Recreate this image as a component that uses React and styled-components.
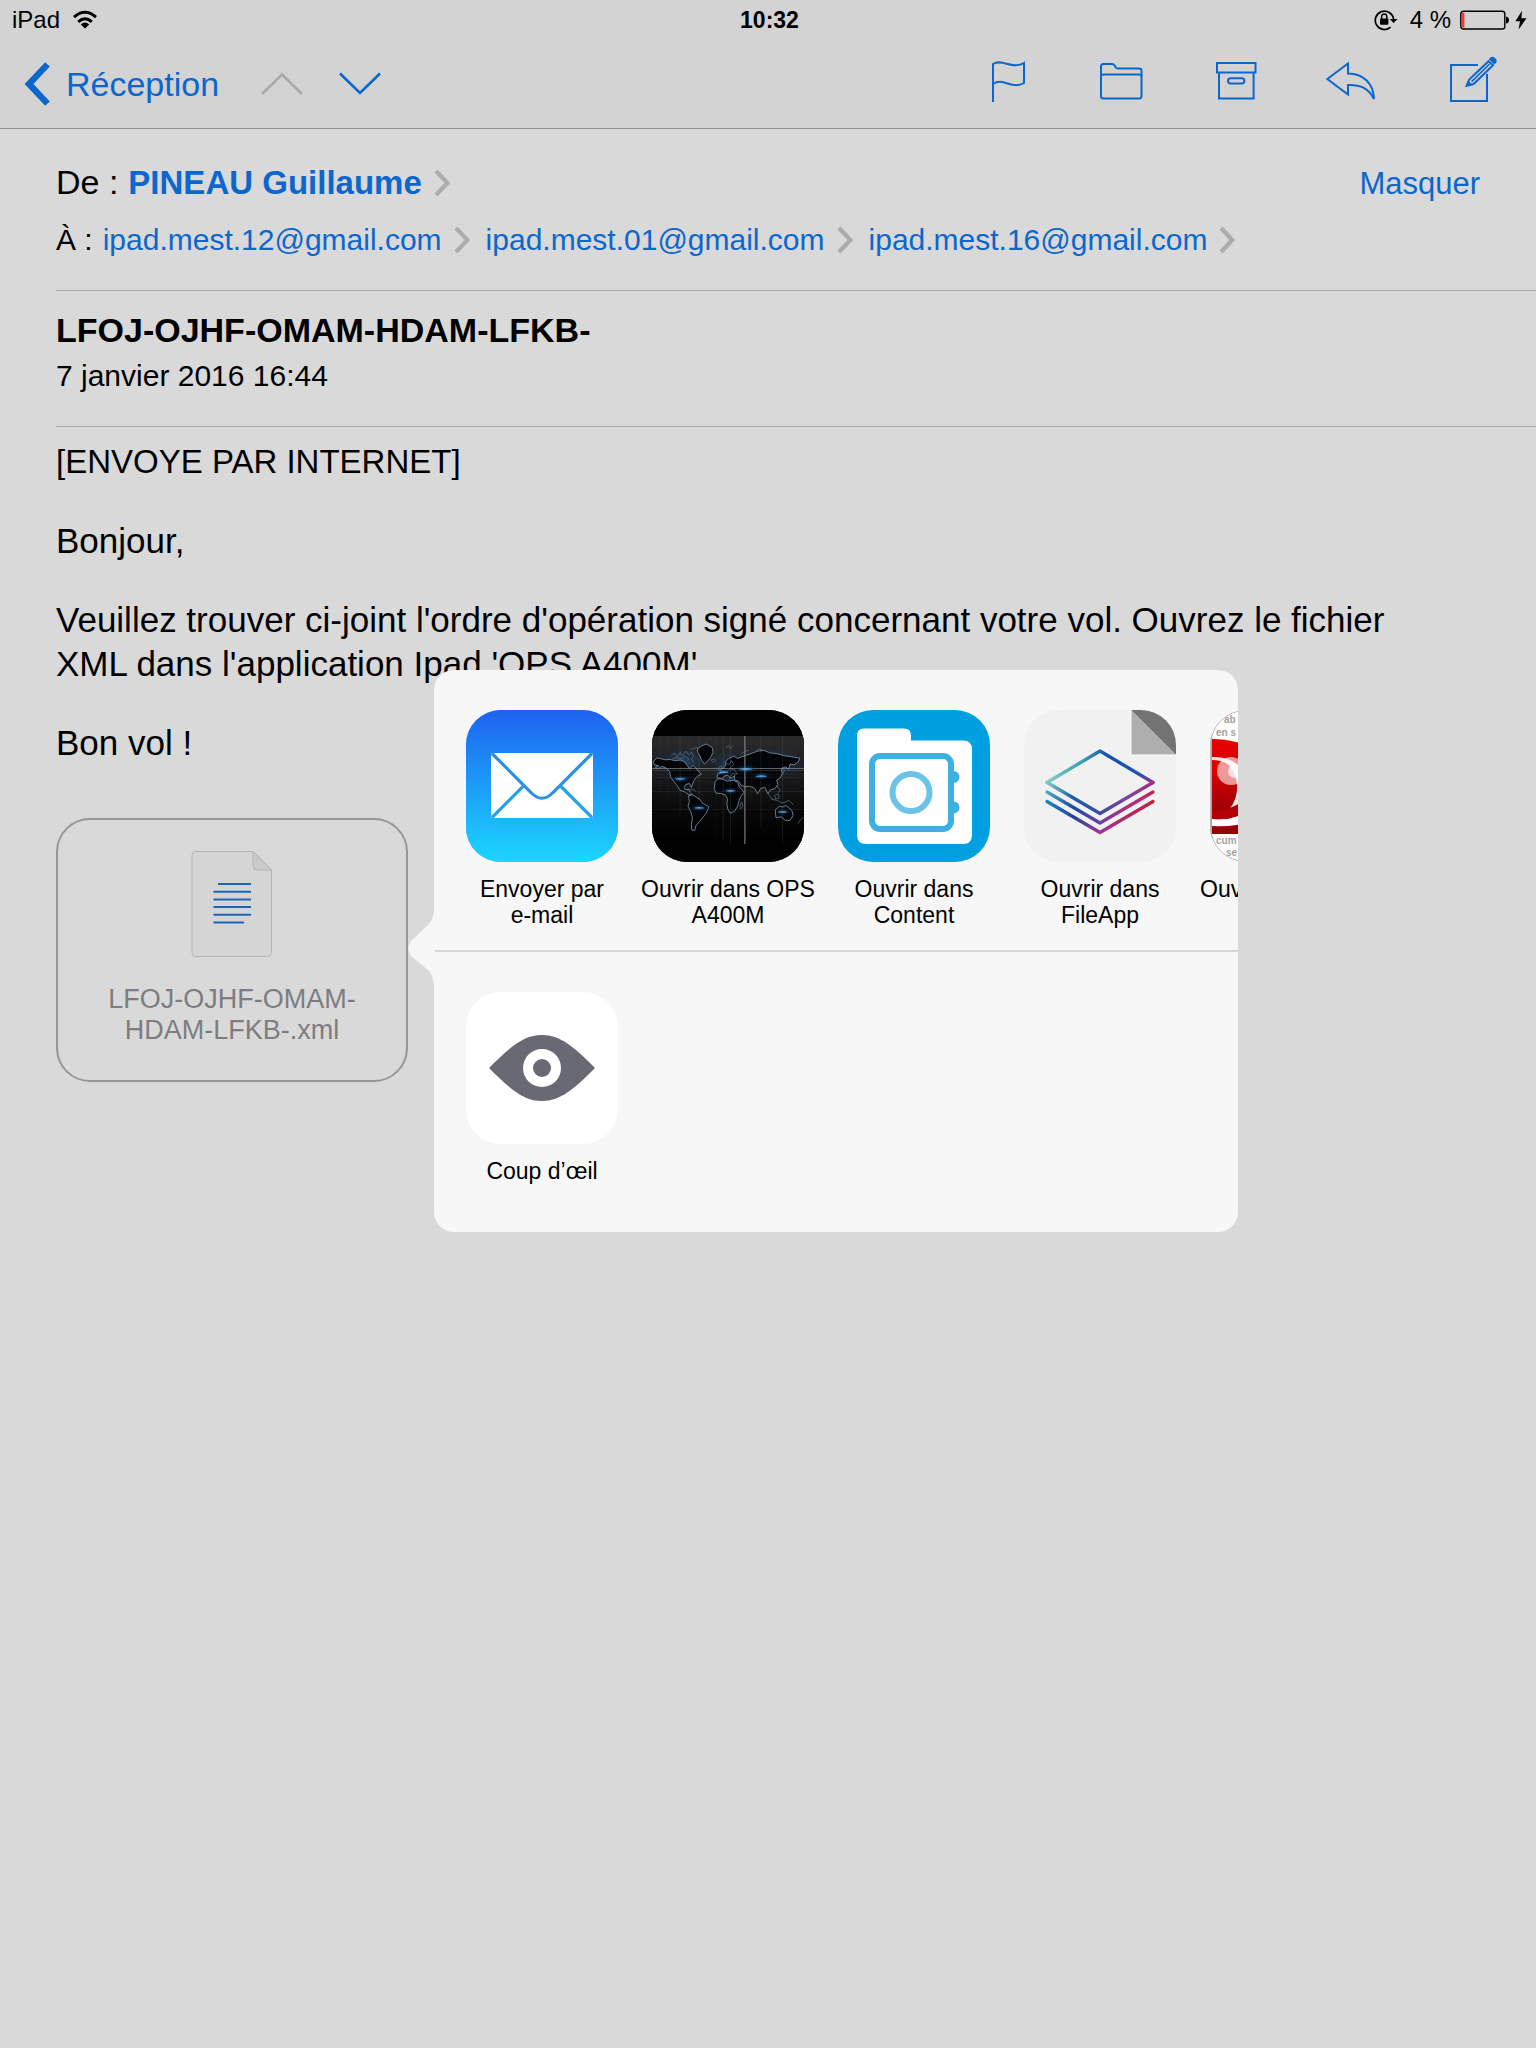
import React from "react";
import styled, { createGlobalStyle } from "styled-components";

const BLUE = "#0b67cd";
const FONT = '"Liberation Sans", Arial, Helvetica, sans-serif';

const GlobalStyle = createGlobalStyle`
  *, *::before, *::after { box-sizing: border-box; }
  body {
    margin: 0;
    background: #d9d9d9;
    color: #000;
    font-family: ${FONT};
  }
  h1, p { margin: 0; }
  svg { display: block; flex: none; }
`;

const Screen = styled.div`
  min-height: 100vh;
  overflow: hidden;
`;

const TopBar = styled.header`
  background: #d3d3d4;
  border-bottom: 1px solid #929294;
`;

const StatusBar = styled.div`
  display: grid;
  grid-template-columns: 1fr auto 1fr;
  align-items: center;
  height: 40px;
  padding: 0 9px 0 12px;
  font-size: 24px;
  line-height: 28px;
`;

const StatusGroup = styled.div`
  display: flex;
  align-items: center;
  gap: ${(p) => p.$gap}px;
  justify-content: ${(p) => (p.$end ? "flex-end" : "flex-start")};
`;

const Clock = styled.time`
  font-size: 23px;
  font-weight: 700;
`;

const NavBar = styled.nav`
  display: flex;
  align-items: center;
  justify-content: space-between;
  height: 88px;
  padding: 0 38px 0 24px;
`;

const NavGroup = styled.div`
  display: flex;
  align-items: center;
  gap: ${(p) => p.$gap}px;
`;

const PlainButton = styled.button`
  display: flex;
  align-items: center;
  padding: 0;
  border: 0;
  background: none;
  color: ${BLUE};
  font: inherit;
  cursor: pointer;

  &:disabled {
    color: #a9a9aa;
    cursor: default;
  }
`;

const BackButton = styled(PlainButton)`
  gap: 14px;
  padding-right: 6px;
  font-size: 34px;
  line-height: 44px;
`;

const TextButton = styled(PlainButton)`
  font-size: 31px;
  line-height: 36px;
`;

const Message = styled.main`
  padding-left: 56px;
`;

const Addresses = styled.section`
  display: flex;
  flex-direction: column;
  gap: 17px;
  padding: 31px 56px 32px 0;
  border-bottom: 1px solid #a9a9aa;
`;

const AddressRow = styled.div`
  display: flex;
  align-items: baseline;
  gap: ${(p) => p.$gap}px;
  font-size: ${(p) => p.$size}px;
  line-height: ${(p) => p.$line}px;
`;

const Contact = styled.a`
  display: flex;
  align-items: center;
  gap: 12px;
  color: ${BLUE};
  font-size: ${(p) => (p.$strong ? 33 : 30)}px;
  font-weight: ${(p) => (p.$strong ? 700 : 400)};
  text-decoration: none;
`;

const Recipients = styled.div`
  display: flex;
  flex-wrap: wrap;
  gap: 14px;
`;

const Spacer = styled.span`
  flex: 1;
`;

const SubjectBlock = styled.section`
  display: flex;
  flex-direction: column;
  gap: 8px;
  padding: 19px 0 32px;
  border-bottom: 1px solid #a9a9aa;
`;

const Subject = styled.h1`
  font-size: 34px;
  line-height: 40px;
`;

const SentDate = styled.time`
  font-size: 30px;
  line-height: 36px;
`;

const Body = styled.div`
  display: flex;
  flex-direction: column;
  gap: 35px;
  padding: 13px 84px 0 0;
  font-size: 35px;
  line-height: 44px;
`;

const Notice = styled.p`
  font-size: 33px;
`;

const AttachmentArea = styled.div`
  position: relative;
  width: 352px;
  margin-top: 53px;
`;

const Attachment = styled.button`
  display: flex;
  flex-direction: column;
  align-items: center;
  gap: 26px;
  width: 100%;
  height: 264px;
  padding: 30px 40px 0;
  border: 2px solid #979797;
  border-radius: 34px;
  background: none;
  color: #7d7d80;
  font-family: inherit;
  font-size: 27px;
  line-height: 31px;
`;

const Popover = styled.aside`
  position: absolute;
  top: -148px;
  left: 378px;
  width: 804px;
`;

const PopoverArrow = styled.svg`
  position: absolute;
  top: 240px;
  left: -26px;
`;

const Sheet = styled.div`
  overflow: hidden;
  border-radius: 20px;
  background: #f7f7f7;
`;

const ShareRow = styled.div`
  display: flex;
  gap: 14px;
  height: ${(p) => (p.$divided ? 282 : 280)}px;
  padding: 40px 0 0 22px;
  border-bottom: ${(p) => (p.$divided ? "2px solid #d5d6d8" : "0")};
  overflow: hidden;
`;

const ShareTile = styled.button`
  display: flex;
  flex: none;
  flex-direction: column;
  align-items: center;
  gap: 14px;
  width: 172px;
  padding: 0;
  border: 0;
  background: none;
  color: #000;
  font-family: inherit;
  cursor: pointer;
`;

const AppIcon = styled.span`
  display: block;
  flex: none;
  width: 152px;
  height: 152px;
  border-radius: 35px;
  background: ${(p) => p.$fill};
  overflow: hidden;
`;

const TileLabel = styled.span`
  align-self: ${(p) => (p.$start ? "flex-start" : "center")};
  font-size: 23px;
  line-height: 26px;
  white-space: pre;
`;

function WifiIcon() {
  return (
    <svg width="26" height="20" viewBox="0 0 26 20" fill="none" stroke="#000" strokeWidth="3">
      <path d="M2 7.2Q13 -2.6 24 7.2" />
      <path d="M6.2 11.8Q13 5.8 19.8 11.8" />
      <path d="M13 18.5L8.8 14.4Q13 10.8 17.2 14.4Z" fill="#000" stroke="none" />
    </svg>
  );
}

function RotationLockIcon() {
  return (
    <svg width="24" height="22" viewBox="0 0 24 22" fill="none" stroke="#000">
      <path d="M16.6 18.2A9.2 9.2 0 1 1 19.6 10" strokeWidth="1.7" />
      <path d="M15.6 10H23.6L19.6 14Z" fill="#000" stroke="none" />
      <rect x="6" y="9.4" width="8.4" height="6.4" rx="1" fill="#000" stroke="none" />
      <path d="M7.6 10V7.6A2.6 2.6 0 0 1 12.8 7.6V10" strokeWidth="1.5" />
    </svg>
  );
}

function BatteryIcon() {
  return (
    <svg width="50" height="20" viewBox="0 0 50 20">
      <rect x="0.8" y="1.2" width="44" height="17.8" rx="2.6" fill="none" stroke="#000" strokeWidth="1.4" />
      <rect x="2" y="2.6" width="2.4" height="15" fill="#ee3b35" />
      <path d="M46 6.4Q49 7 49 10T46 13.6Z" />
    </svg>
  );
}

function BoltIcon() {
  return (
    <svg width="12" height="20" viewBox="0 0 12 20">
      <path d="M7 0.8L0.4 11.2H5L3.6 19.4L11.6 8.2H6.4Z" />
    </svg>
  );
}

function BackChevron() {
  return (
    <svg width="28" height="44" viewBox="0 0 28 44" fill="none" stroke={BLUE} strokeWidth="6.4">
      <path d="M23.5 2.4L5 22L23.5 41.6" />
    </svg>
  );
}

function MessageChevron({ down }) {
  return (
    <svg width="42" height="24" viewBox="0 0 42 24" fill="none" stroke="currentColor" strokeWidth="2.6">
      <path d={down ? "M1 1.5L21 21L41 1.5" : "M1 22L21 2.5L41 22"} />
    </svg>
  );
}

function Disclosure() {
  return (
    <svg width="18" height="28" viewBox="0 0 18 28" fill="none" stroke="#acacad" strokeWidth="4.2">
      <path d="M2 2L13.4 14L2 26" />
    </svg>
  );
}

function ToolIcon({ children }) {
  return (
    <svg width="56" height="56" viewBox="0 0 56 56" fill="none" stroke={BLUE} strokeWidth="2">
      {children}
    </svg>
  );
}

const TOOLS = [
  {
    label: "Signaler",
    art: <path d="M15 46V8C24 2 34 14 46 7V27C34 34 25 21 15 28" />,
  },
  {
    label: "Dossier",
    art: (
      <>
        <path d="M7 40V10.5Q7 8 9.5 8H18Q20 8 20.8 9.8L21.8 11.6Q22.4 12.6 24 12.6H45Q47.5 12.6 47.5 15V40Q47.5 42.5 45 42.5H9.5Q7 42.5 7 40Z" />
        <path d="M7 20.5Q7 18.6 9.5 18.6H45Q47.5 18.6 47.5 20.5" />
      </>
    ),
  },
  {
    label: "Archiver",
    art: (
      <>
        <path d="M7 7H45.5V16.4H7ZM9 16.4H43.6V42.4H9Z" />
        <rect x="18" y="22.2" width="16.4" height="5.2" rx="2.6" />
      </>
    ),
  },
  {
    label: "Répondre",
    art: <path d="M1.4 23L22 7.4V17.4C37 17.4 47.5 27 48 43C42.5 32.5 35 28.6 22 29V38.6Z" />,
  },
  {
    label: "Nouveau message",
    art: (
      <>
        <path d="M36 9H9V45H45V18" />
        <path d="M46.6 5.2L51 9.2L31.6 28L24.6 29.8L27.2 23.6Z" />
        <path d="M29.6 25.6L47.6 8" strokeWidth="1.6" />
        <path d="M24 30.4L26.2 24.6L30.2 28.4Z" fill={BLUE} stroke="none" />
        <path d="M47.4 2.4Q49.6 -0.8 53 2Q56.4 5 53.2 7.8L52.4 8.4L46.8 3.2Z" fill={BLUE} stroke="none" />
      </>
    ),
  },
];

function DocumentIcon() {
  return (
    <svg width="82" height="108" viewBox="0 0 82 108" fill="none">
      <path d="M4.5 1.5H62L80.5 20V102.5Q80.5 106.5 76.5 106.5H4.5Q1 106.5 1 102.5V5.5Q1 1.5 4.5 1.5Z" fill="#d5d5d5" stroke="#b4b4b6" />
      <path d="M62 1.5V16.5Q62 20 66 20H80.5Z" fill="#cacaca" stroke="#b4b4b6" />
      <g stroke="#1c65ba" strokeWidth="2">
        <path d="M27 34H60M22.5 41.7H60M22.5 49.5H60M22.5 57H60M22.5 64.7H60M22.5 72.5H53" />
      </g>
    </svg>
  );
}

function MailArt() {
  return (
    <svg width="152" height="152" viewBox="0 0 152 152">
      <defs>
        <linearGradient id="mailSky" x1="0" y1="0" x2="0" y2="1">
          <stop offset="0" stopColor="#1f62f0" />
          <stop offset="1" stopColor="#1bd6fe" />
        </linearGradient>
      </defs>
      <rect width="152" height="152" fill="url(#mailSky)" />
      <rect x="25" y="43" width="102" height="65" rx="2" fill="#fff" />
      <g fill="none" stroke="#2f90e0" strokeWidth="3.2">
        <path d="M26 43.5L65 82.5Q76 94 87 82.5L126 43.5" />
        <path d="M26 107.5L57.5 76M126 107.5L94.5 76" stroke="#2ba3e2" />
      </g>
    </svg>
  );
}

const GLOWS = [
  [122, 236, 30],
  [178, 323, 26],
  [272, 272, 26],
  [318, 207, 34],
  [364, 228, 30],
  [428, 335, 24],
  [252, 216, 26],
];

function WorldArt() {
  return (
    <svg width="152" height="152" viewBox="37 30 455 455">
      <defs>
        <linearGradient id="night" x1="0" y1="0" x2="0" y2="1">
          <stop offset="0" stopColor="#2b2b2c" />
          <stop offset="0.35" stopColor="#1a1b1d" />
          <stop offset="0.7" stopColor="#080808" />
          <stop offset="1" stopColor="#000" />
        </linearGradient>
        <radialGradient id="glow">
          <stop offset="0" stopColor="#3fa9ff" stopOpacity="0.85" />
          <stop offset="0.35" stopColor="#1d6fc0" stopOpacity="0.5" />
          <stop offset="1" stopColor="#0b3a70" stopOpacity="0" />
        </radialGradient>
      </defs>
      <rect x="37" y="30" width="455" height="455" fill="#000" />
      <rect x="37" y="108" width="455" height="325" fill="url(#night)" />
      <g fill="url(#glow)" opacity="0.4">
        <ellipse cx="130" cy="185" rx="90" ry="45" />
        <ellipse cx="265" cy="200" rx="60" ry="60" />
        <ellipse cx="400" cy="190" rx="110" ry="50" />
      </g>
      <g fill="#020407" stroke="#6d8498" strokeWidth="2.8" strokeLinejoin="round">
        <path d="M40 186L52 173L76 179L92 178L105 182L122 180L134 185L143 197L150 206L160 196L168 203L176 214L185 222L172 229L163 241L158 252L155 262L149 250L138 253L133 262L139 269L147 266L151 277L158 284L148 283L137 276L121 270L112 256L102 243L93 231L90 215L79 203L66 199L55 205L47 203L57 197L44 194Z" />
        <path d="M146 287L158 284L170 291L181 298L187 308L207 320L201 336L193 347L184 358L176 367L168 377L165 390L156 389L155 372L158 352L153 335L145 318L149 304Z" />
        <path d="M173 146L186 137L200 132L217 142L220 157L212 172L203 184L194 191L185 180L180 166L174 157Z" />
        <path d="M226 244L235 236L249 237L263 243L280 240L293 246L299 261L313 276L302 290L297 304L293 319L284 333L271 339L264 327L261 312L263 297L257 285L244 280L229 279L223 266Z" />
        <path d="M232 233L234 221L245 219L243 208L252 203L259 195L256 186L266 176L282 168L293 175L306 170L318 166L334 160L354 153L372 151L389 158L411 161L435 167L460 171L479 174L475 186L462 194L450 192L446 208L437 200L424 205L427 220L420 234L410 240L414 253L404 266L391 269L384 280L375 262L363 264L353 281L344 264L329 258L316 260L303 255L297 244L283 238L285 226L273 235L264 225L253 228L247 235Z" />
        <path d="M406 329L419 318L429 321L436 316L443 320L456 331L459 346L450 361L436 360L424 350L408 352Z" />
      </g>
      <g fill="none" stroke="#5d7a94" strokeWidth="2">
        <path d="M95 167L104 158L112 170L121 157L128 167L139 153L147 165L155 155L162 168L155 178L163 187M98 177L110 172L124 176L137 168L148 178M152 149L164 144L174 142M213 180L224 176L228 181L220 186Z" />
        <path d="M258 142L268 137L272 146L280 136M302 162L314 154L327 151M348 152L358 146L367 150M300 316L306 305L309 318L302 326Z" />
        <path d="M381 276L391 289L400 300M394 296L412 301L427 309L446 301L461 313M404 286L415 281L418 294L407 296ZM426 225L434 211L427 203M411 257L421 270L414 278M474 370L482 358L490 352" />
        <path d="M133 267L145 270L158 267L168 273M241 214L235 204L244 197L249 207M267 238L278 220L292 222L284 208L270 206L262 214M257 186L267 194L275 181L281 194L271 203" />
      </g>
      <g stroke="#8a8c90" fill="none">
        <path d="M37 205H492" strokeWidth="3" opacity="0.7" />
        <path d="M37 211H492" strokeWidth="2" opacity="0.4" />
        <path d="M37 222H492M37 232H492M37 274H492M37 328H492" strokeWidth="1.5" opacity="0.22" />
        <path d="M121 108V340M178 108V300M250 108V420M272 108V430M363 108V380M428 108V430" strokeWidth="2.4" opacity="0.2" />
        <path d="M60 108V280M85 108V300M150 108V260M230 108V420M335 108V300M390 108V320" strokeWidth="1.5" opacity="0.12" />
        <path d="M315 108V431" strokeWidth="4.5" opacity="0.7" />
      </g>
      {GLOWS.map(([x, y, r]) => (
        <g key={x}>
          <ellipse cx={x} cy={y} rx={r} ry={r * 0.4} fill="url(#glow)" opacity="0.8" />
          <ellipse cx={x} cy={y} rx={r * 0.55} ry="2" fill="#7cc8ff" opacity="0.75" />
        </g>
      ))}
    </svg>
  );
}

function ContentArt() {
  return (
    <svg width="152" height="152" viewBox="0 0 152 152" fill="none">
      <path d="M26 18.5H66Q73 18.5 73 25.5V30.5H125Q134 30.5 134 39.5V125Q134 134 125 134H28Q19 134 19 125V25.5Q19 18.5 26 18.5Z" fill="#fff" />
      <g fill="#3db0e2">
        <circle cx="115.5" cy="67" r="6" />
        <circle cx="115.5" cy="97.5" r="6" />
      </g>
      <rect x="34" y="46" width="79" height="73" rx="8" fill="#fff" stroke="#3db0e2" strokeWidth="6" />
      <circle cx="73" cy="82.5" r="18.5" stroke="#6bc4e8" strokeWidth="6" />
    </svg>
  );
}

function FileAppArt() {
  return (
    <svg width="152" height="152" viewBox="0 0 152 152" fill="none">
      <defs>
        <linearGradient id="sheetTop" gradientUnits="userSpaceOnUse" x1="22" y1="60" x2="130" y2="80">
          <stop offset="0" stopColor="#86d6c0" />
          <stop offset="0.3" stopColor="#3f9fb8" />
          <stop offset="0.52" stopColor="#1650a8" />
          <stop offset="0.8" stopColor="#1b55b4" />
          <stop offset="1" stopColor="#a02e84" />
        </linearGradient>
        <linearGradient id="sheetFront" gradientUnits="userSpaceOnUse" x1="22" y1="72" x2="130" y2="72">
          <stop offset="0" stopColor="#7fd0bf" />
          <stop offset="0.25" stopColor="#1d5cae" />
          <stop offset="0.5" stopColor="#3b4aa8" />
          <stop offset="0.75" stopColor="#7c459b" />
          <stop offset="1" stopColor="#a02e84" />
        </linearGradient>
        <linearGradient id="sheetMid" gradientUnits="userSpaceOnUse" x1="22" y1="90" x2="130" y2="90">
          <stop offset="0" stopColor="#4fb0c0" />
          <stop offset="0.25" stopColor="#174aa3" />
          <stop offset="0.5" stopColor="#6e409f" />
          <stop offset="0.75" stopColor="#b02b83" />
          <stop offset="1" stopColor="#b92a66" />
        </linearGradient>
        <linearGradient id="sheetLow" gradientUnits="userSpaceOnUse" x1="22" y1="100" x2="130" y2="100">
          <stop offset="0" stopColor="#1f86c8" />
          <stop offset="0.25" stopColor="#1f459f" />
          <stop offset="0.5" stopColor="#a13191" />
          <stop offset="1" stopColor="#c0243c" />
        </linearGradient>
      </defs>
      <path d="M107 0H152V45Z" fill="#737373" />
      <path d="M107 0V45H152Z" fill="#aeaeae" />
      <path d="M107 0V45H152" stroke="#fff" strokeWidth="1" />
      <g strokeWidth="3.4" strokeLinecap="round" strokeLinejoin="round">
        <path d="M23 72.5L76 41L129 72.5" stroke="url(#sheetTop)" />
        <path d="M23 72.5L76 103.5L129 72.5" stroke="url(#sheetFront)" />
        <path d="M23 82L76 113L129 82" stroke="url(#sheetMid)" />
        <path d="M23 91.5L76 122.5L129 91.5" stroke="url(#sheetLow)" />
      </g>
    </svg>
  );
}

const ClippingText = styled.text`
  fill: #a3a3a3;
  font: 700 10px ${FONT};
`;

function RedBadgeArt() {
  return (
    <svg width="152" height="152" viewBox="0 0 152 152">
      <defs>
        <linearGradient id="redGloss" x1="0" y1="0" x2="0" y2="1">
          <stop offset="0" stopColor="#ea0000" />
          <stop offset="1" stopColor="#940008" />
        </linearGradient>
      </defs>
      <rect width="152" height="152" fill="#fff" />
      <ClippingText x="14" y="13">ab</ClippingText>
      <ClippingText x="6" y="26">en s</ClippingText>
      <path d="M2 29Q20 29 40 36V124H2Z" fill="url(#redGloss)" />
      <path d="M2 47Q18 46 28 55Q38 66 40 80V100Q24 112 2 111V107Q26 104 27 77Q26 50 2 50Z" fill="#f2e4e4" />
      <circle cx="0" cy="78" r="27" fill="url(#redGloss)" />
      <path d="M2 101Q22 101 40 86V100Q22 112 2 109Z" fill="#b40008" />
      <path d="M2 109Q22 112 40 100V112Q22 117 2 116Z" fill="#fff" />
      <circle cx="21" cy="61" r="14" fill="#fff" opacity="0.6" />
      <circle cx="25" cy="61" r="7" fill="#fff" opacity="0.7" />
      <path d="M2 124H40V152H2Z" fill="#fff" />
      <ClippingText x="6" y="134">cum</ClippingText>
      <ClippingText x="16" y="146">se</ClippingText>
      <path d="M1 22V130" stroke="#a9a9a9" strokeWidth="2" />
      <rect x="0.5" y="0.5" width="151" height="151" rx="35" fill="none" stroke="#b5b5b5" />
    </svg>
  );
}

function EyeArt() {
  return (
    <svg width="152" height="152" viewBox="0 0 152 152" fill="#696973">
      <path d="M23 76C45 54 58 43 76 43S107 54 129 76C107 98 94 109 76 109S45 98 23 76Z" />
      <circle cx="76" cy="76" r="19" fill="#fff" />
      <circle cx="76" cy="76" r="9" />
    </svg>
  );
}

const RECIPIENTS = ["ipad.mest.12@gmail.com", "ipad.mest.01@gmail.com", "ipad.mest.16@gmail.com"];

const APPS = [
  { label: "Envoyer par\ne-mail", fill: "#1f9cf8", art: <MailArt /> },
  { label: "Ouvrir dans OPS\nA400M", fill: "#000", art: <WorldArt /> },
  { label: "Ouvrir dans\nContent", fill: "#009fe0", art: <ContentArt /> },
  { label: "Ouvrir dans\nFileApp", fill: "#f1f1f1", art: <FileAppArt /> },
  { label: "Ouvrir dans", fill: "#fff", art: <RedBadgeArt />, start: true },
];

export default function App() {
  return (
    <Screen>
      <GlobalStyle />
      <TopBar>
        <StatusBar>
          <StatusGroup $gap={12}>
            <span>iPad</span>
            <WifiIcon />
          </StatusGroup>
          <Clock>10:32</Clock>
          <StatusGroup $gap={5} $end>
            <StatusGroup $gap={9}>
              <StatusGroup $gap={12}>
                <RotationLockIcon />
                <span>4 %</span>
              </StatusGroup>
              <BatteryIcon />
            </StatusGroup>
            <BoltIcon />
          </StatusGroup>
        </StatusBar>
        <NavBar>
          <NavGroup $gap={36}>
            <BackButton type="button">
              <BackChevron />
              Réception
            </BackButton>
            <PlainButton type="button" aria-label="Message précédent" disabled>
              <MessageChevron />
            </PlainButton>
            <PlainButton type="button" aria-label="Message suivant">
              <MessageChevron down />
            </PlainButton>
          </NavGroup>
          <NavGroup $gap={60}>
            {TOOLS.map((tool) => (
              <PlainButton key={tool.label} type="button" aria-label={tool.label}>
                <ToolIcon>{tool.art}</ToolIcon>
              </PlainButton>
            ))}
          </NavGroup>
        </NavBar>
      </TopBar>

      <Message>
        <Addresses>
          <AddressRow $size={34} $line={44} $gap={10}>
            <span>De :</span>
            <Contact href="#expediteur" $strong>
              PINEAU Guillaume
              <Disclosure />
            </Contact>
            <Spacer />
            <TextButton type="button">Masquer</TextButton>
          </AddressRow>
          <AddressRow $size={30} $line={36} $gap={10}>
            <span>À :</span>
            <Recipients>
              {RECIPIENTS.map((address) => (
                <Contact key={address} href={`mailto:${address}`}>
                  {address}
                  <Disclosure />
                </Contact>
              ))}
            </Recipients>
          </AddressRow>
        </Addresses>

        <SubjectBlock>
          <Subject>LFOJ-OJHF-OMAM-HDAM-LFKB-</Subject>
          <SentDate dateTime="2016-01-07T16:44">7 janvier 2016 16:44</SentDate>
        </SubjectBlock>

        <Body>
          <Notice>[ENVOYE PAR INTERNET]</Notice>
          <p>Bonjour,</p>
          <p>
            Veuillez trouver ci-joint l'ordre d'opération signé concernant votre vol. Ouvrez le fichier XML dans
            l'application Ipad 'OPS A400M'
          </p>
          <p>Bon vol !</p>
        </Body>

        <AttachmentArea>
          <Attachment type="button">
            <DocumentIcon />
            <span>LFOJ-OJHF-OMAM-HDAM-LFKB-.xml</span>
          </Attachment>
          <Popover aria-label="Partager">
            <PopoverArrow width="27" height="78" viewBox="0 0 27 78">
              <path d="M27 0H26Q26 9 20 15L3 31Q-2 39 3 46L20 60Q26 66 26 78H27Z" fill="#f7f7f7" />
            </PopoverArrow>
            <Sheet>
              <ShareRow $divided>
                {APPS.map((app) => (
                  <ShareTile key={app.label} type="button">
                    <AppIcon $fill={app.fill}>{app.art}</AppIcon>
                    <TileLabel $start={app.start}>{app.label}</TileLabel>
                  </ShareTile>
                ))}
              </ShareRow>
              <ShareRow>
                <ShareTile type="button">
                  <AppIcon $fill="#fff">
                    <EyeArt />
                  </AppIcon>
                  <TileLabel>Coup d’œil</TileLabel>
                </ShareTile>
              </ShareRow>
            </Sheet>
          </Popover>
        </AttachmentArea>
      </Message>
    </Screen>
  );
}
